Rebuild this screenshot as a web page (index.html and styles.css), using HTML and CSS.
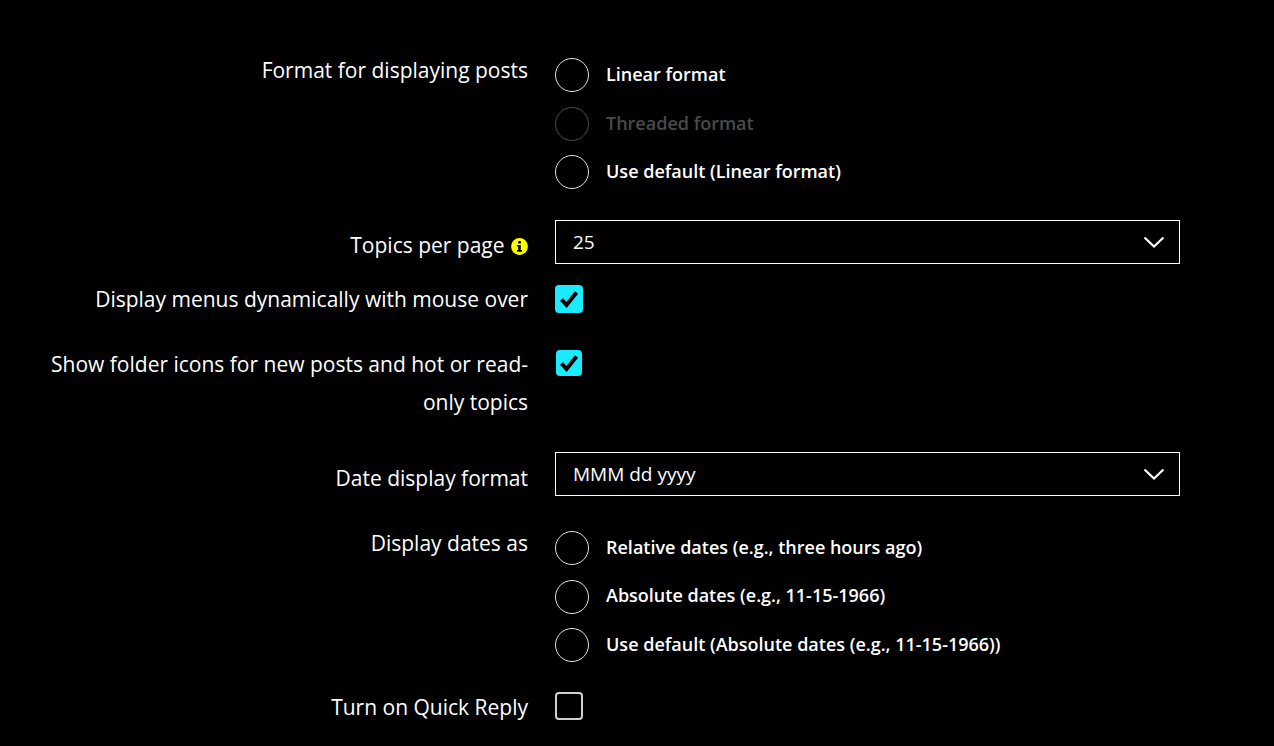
FILE: index.html
```html
<!DOCTYPE html>
<html lang="en">
<head>
  <meta charset="UTF-8">
  <title>Settings</title>
  <link rel="stylesheet" href="styles.css">
</head>
<body>
  <form class="settings">

    <div class="row row-spaced">
      <div class="label">Format for displaying posts</div>
      <div class="radios">
        <label class="option"><input type="radio" name="format"><span>Linear format</span></label>
        <label class="option disabled"><input type="radio" name="format" disabled><span>Threaded format</span></label>
        <label class="option"><input type="radio" name="format"><span>Use default (Linear format)</span></label>
      </div>
    </div>

    <div class="row row-select row-tight">
      <div class="label">Topics per page
        <svg class="info" width="17" height="17" viewBox="0 0 17 17">
          <circle cx="8.5" cy="8.5" r="8.4" fill="#ffff00"/>
          <rect x="7.2" y="3" width="2.8" height="2.6" rx="0.6" fill="#000"/>
          <path d="M6.2 7h3.6v5h1.2v1.8H6v-1.8h1.2V8.7h-1z" fill="#000"/>
        </svg>
      </div>
      <div class="select">
        <span>25</span>
        <svg width="22" height="12" viewBox="0 0 22 12"><path d="M1.5 1.5 11 10.5l9.5-9" fill="none" stroke="#fff" stroke-width="2.2"/></svg>
      </div>
    </div>

    <div class="row">
      <div class="label">Display menus dynamically with mouse over</div>
      <div class="check-cell">
        <span class="checkbox checked">
          <svg width="20" height="18" viewBox="0 0 20 18"><path d="M2.5 9.5 7.5 15 17.5 2.5" fill="none" stroke="#000" stroke-width="4"/></svg>
        </span>
      </div>
    </div>

    <div class="row row-spaced">
      <div class="label">Show folder icons for new posts and hot or read-only topics</div>
      <div class="check-cell">
        <span class="checkbox checked small">
          <svg width="20" height="18" viewBox="0 0 20 18"><path d="M2.5 9.5 7.5 15 17.5 2.5" fill="none" stroke="#000" stroke-width="4"/></svg>
        </span>
      </div>
    </div>

    <div class="row row-select row-date">
      <div class="label">Date display format</div>
      <div class="select">
        <span>MMM dd yyyy</span>
        <svg width="22" height="12" viewBox="0 0 22 12"><path d="M1.5 1.5 11 10.5l9.5-9" fill="none" stroke="#fff" stroke-width="2.2"/></svg>
      </div>
    </div>

    <div class="row row-dates">
      <div class="label">Display dates as</div>
      <div class="radios">
        <label class="option"><input type="radio" name="dates"><span>Relative dates (e.g., three hours ago)</span></label>
        <label class="option"><input type="radio" name="dates"><span>Absolute dates (e.g., 11-15-1966)</span></label>
        <label class="option"><input type="radio" name="dates"><span>Use default (Absolute dates (e.g., 11-15-1966))</span></label>
      </div>
    </div>

    <div class="row row-last">
      <div class="label">Turn on Quick Reply</div>
      <div class="check-cell">
        <span class="checkbox"></span>
      </div>
    </div>

  </form>
</body>
</html>
```

FILE: styles.css
```css
body {
  background-color: #000;
  color: #fff;
  margin: 0;
  font-family: "Open Sans", "Noto Sans", Arial, sans-serif;
  height: 746px;
  overflow: hidden;
}
.settings {
  padding: 51px 94px 0 40px;
}
.row {
  display: grid;
  grid-template-columns: 488px 625px;
  column-gap: 27px;
  margin-bottom: 27px;
}
.row-spaced {
  margin-bottom: 31px;
}
.row-tight {
  margin-bottom: 16px;
}
.row-dates {
  margin-bottom: 26px;
}
.label {
  font-size: 21px;
  line-height: 38px;
  text-align: right;
}
.row-select .label {
  padding-top: 6px;
}
.row-date .label {
  padding-top: 7px;
}
.info {
  vertical-align: -2px;
  margin-left: 1px;
}
.radios {
  padding-top: 7px;
  display: flex;
  flex-direction: column;
  gap: 14.5px;
}
.option {
  display: flex;
  align-items: center;
  gap: 17px;
  height: 34px;
  font-size: 18px;
  font-weight: 600;
}
.option span {
  padding-bottom: 3px;
}
.option input {
  appearance: none;
  width: 34px;
  height: 34px;
  margin: 0;
  border: 1px solid #e0e0e0;
  border-radius: 50%;
  background: #000;
}
.option.disabled {
  color: #4a4a4a;
}
.option.disabled span {
  padding-bottom: 1px;
}
.option.disabled input {
  border-color: #4a4a4a;
}
.select {
  display: flex;
  justify-content: space-between;
  align-items: center;
  height: 44px;
  box-sizing: border-box;
  border: 1px solid #fff;
  padding: 0 14px 0 17px;
  font-size: 19px;
}
.check-cell {
  padding-top: 5px;
}
.row-last .check-cell {
  padding-top: 4px;
}
.checkbox {
  display: flex;
  align-items: center;
  justify-content: center;
  box-sizing: border-box;
  width: 28px;
  height: 28px;
  border: 2px solid #d0d0d0;
  border-radius: 4px;
}
.checkbox.checked {
  background-color: #1aebff;
  border-color: #1aebff;
}
.checkbox.small {
  width: 26px;
  height: 26px;
  margin-left: 1px;
}
```
